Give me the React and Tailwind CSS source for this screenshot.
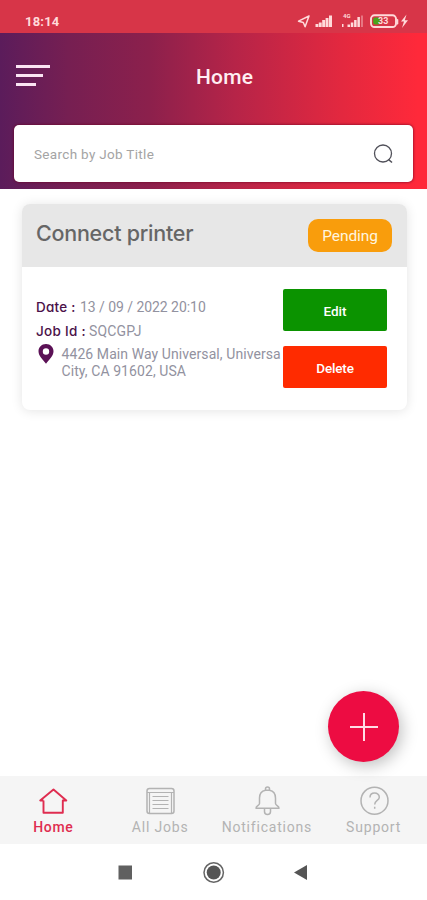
import React from 'react';

function StatusBar() {
  return (
    <div className="flex h-[33px] items-center justify-between bg-[#d73548] pl-[25px] pr-[18px] pt-[9px] text-[#ffdada]">
      <span className="text-[13px] font-bold leading-none tracking-[0.200px]">18:14</span>
      <svg width="112" height="16" viewBox="297 13 112 16" fill="none">
        <path d="M309 16l-10.500 5.200 4.800 1.300 1.800 4.200z" stroke="currentColor" strokeWidth="1.500" strokeLinejoin="round" />
        <g fill="currentColor">
          <path d="M315.500 24h2.800v3h-2.800zM318.800 22.500h2.900v4.500h-2.900zM322.200 20h2.900v7h-2.900zM325.600 18h2.900v9h-2.900zM329 15.500h3v11.500h-3z" />
          <text x="343" y="18" fontSize="6" fontWeight="700">4G</text>
          <path d="M342 24h1.500v3h-1.500zM347.500 24.500h2.500v2.500h-2.500zM350.800 22.500h2.500v4.500h-2.500zM354.100 20h2.500v7h-2.500zM357.400 17h2.500v10h-2.500z" />
          <path opacity=".4" d="M361 15.500h2v11.500h-2z" />
          <path d="M396.500 18.500l1.800 1v4.500l-1.800 1z" />
          <path d="M406.500 14.500l-5.500 7h3l-2 6.500 6-7.800h-3.200z" />
        </g>
        <rect x="371" y="15.300" width="25" height="11.700" rx="3.500" stroke="currentColor" strokeWidth="1.900" />
        <rect x="373.200" y="17.600" width="7" height="7" rx="2" fill="#4ba51c" />
        <text x="378" y="24.300" fontSize="9" fontWeight="700" fill="currentColor">33</text>
      </svg>
    </div>
  );
}

function Header() {
  return (
    <header className="h-[156px] bg-linear-[90deg,#5b1c5b_0%,#761f52_16%,#8c204c_35%,#b62448_55%,#e3283f_80%,#ff293a_98%] px-[14px]">
      <div className="flex h-[92px] items-center pb-[6px]">
        <button className="ml-[2px] flex w-[34px] flex-col gap-[6px] pb-[2px]" aria-label="Menu">
          <span className="h-[3px] w-[34px] bg-[#fbe4f3]" />
          <span className="h-[3px] w-[27px] bg-[#fbe4f3]" />
          <span className="h-[3px] w-[20px] bg-[#fbe4f3]" />
        </button>
        <h1 className="ml-[146px] pt-[2px] text-[21px] font-medium leading-none tracking-[0.200px] text-[#ffeef2]">Home</h1>
      </div>
      <div className="flex h-[57px] items-center justify-between rounded-[5px] bg-white pl-[20px] pr-[19px] shadow-[0_0_3px_#69001f]">
        <span className="pt-[2px] text-[13.500px] tracking-[0.320px] text-[#a4a4a4]">Search by Job Title</span>
        <svg width="22" height="22" viewBox="0 0 22 22" fill="none" stroke="#505059" strokeWidth="1.300">
          <circle cx="11" cy="10.500" r="8.500" />
          <path d="M16.500 16.500l3.500 3" strokeWidth="1.600" />
        </svg>
      </div>
    </header>
  );
}

function JobCard() {
  return (
    <article className="ml-[22px] mt-[15px] h-[206px] w-[385px] overflow-hidden rounded-[8px] bg-white shadow-[0_1px_12px_rgba(0,0,0,0.11)]">
      <div className="flex h-[63px] items-center justify-between bg-[#e7e7e7] pl-[14px] pr-[15px]">
        <h2 className="pb-[3px] font-[Inter,sans-serif] text-[21.500px] font-medium leading-none tracking-[-0.250px] text-[#666] [font-feature-settings:'cv11']">Connect printer</h2>
        <span className="flex h-[33px] w-[84px] items-center justify-center rounded-[10px] bg-[#f99d0c] pt-[2px] text-[15.500px] tracking-[-0.080px] text-[#fff5df]">Pending</span>
      </div>
      <div className="flex pt-[22px]">
        <div className="w-[261px] shrink-0 pl-[14px] pt-[6px] text-[14px] text-[#9292a0]">
          <p className="flex h-[24px] items-center whitespace-pre">
            <b className="w-[44px] shrink-0 font-[Inter,sans-serif] text-[13.500px] font-medium tracking-[0.250px] text-[#4b1149] [font-feature-settings:'cv11']">Date :</b>
            <span className="tracking-[-0.050px]">13 / 09 / 2022 20:10</span>
          </p>
          <p className="flex h-[24px] items-center whitespace-pre">
            <b className="w-[53px] shrink-0 font-[Inter,sans-serif] text-[13.500px] font-medium tracking-[0.300px] text-[#4b1149] [font-feature-settings:'cv11']">Job Id :</b>
            <span className="tracking-[0.150px]">SQCGPJ</span>
          </p>
          <div className="flex pt-[1px]">
            <svg className="ml-[2px] shrink-0" width="16" height="20" viewBox="0 0 16 20">
              <path fill="#5b1156" fillRule="evenodd" d="M8 0C3.500 0 .5 3.300.5 7.300.5 12 5 16 8 19.800 11 16 15.500 12 15.500 7.300 15.500 3.300 12.500 0 8 0zm0 4.300a3.200 3.200 0 1 1 0 6.400 3.200 3.200 0 0 1 0-6.400z" />
            </svg>
            <p className="ml-[7.500px] whitespace-nowrap pt-[2px] leading-[17px] tracking-[0.080px]">4426 Main Way Universal, Universa<br />City, CA 91602, USA</p>
          </div>
        </div>
        <div className="flex w-[104px] shrink-0 flex-col gap-[15px] text-[13.500px] text-white">
          <button className="h-[42px] rounded-[2px] bg-[#0b9300] pt-[2px] font-medium">Edit</button>
          <button className="h-[42px] rounded-[2px] bg-[#ff2b00] pt-[2px] font-medium tracking-[-0.150px]">Delete</button>
        </div>
      </div>
    </article>
  );
}

function Tab({ label, active, children }) {
  return (
    <div className={active ? 'flex flex-1 flex-col items-center text-[#df2d50]' : 'flex flex-1 flex-col items-center text-[#b3b3b3]'}>
      <svg width="32" height="32" viewBox="0 0 32 32" fill="none" stroke="currentColor" strokeWidth="1.500">{children}</svg>
      <span className={active ? 'mt-[2px] text-[14px] font-medium leading-[16px] tracking-[0.700px]' : 'mt-[2px] text-[14px] leading-[16px] tracking-[0.800px]'}>{label}</span>
    </div>
  );
}

function TabBar() {
  return (
    <nav className="flex h-[68px] bg-[#f5f5f5] pt-[9px]">
      <Tab label="Home" active>
        <path strokeWidth="1.900" d="M6.500 15.500v12.300h19.300V15.500h3.500L16.500 4.500 3.200 15.500h3.300" strokeLinejoin="round" />
      </Tab>
      <Tab label="All Jobs">
        <rect x="3" y="3.500" width="27" height="25" rx="2.500" />
        <path d="M3 7.500h27M5.500 7.500v20.500M27.500 7.500v20.500M8.500 11.500h16M8.500 15.500h16M8.500 19.500h16M8.500 23.500h16" strokeWidth="1.200" />
      </Tab>
      <Tab label="Notifications">
        <path strokeLinejoin="round" d="M14.500 5.300V4a2 2 0 0 1 4 0v1.300c3.700.8 6 3.500 6 7.700v5.500c0 2 3.500 2.500 3.500 4.800H5c0-2.300 3.500-2.800 3.500-4.800V13c0-4.200 2.300-6.900 6-7.700zM13.500 23.500v3a3 3 0 0 0 6 0v-3M14.500 5.300h4" />
      </Tab>
      <Tab label="Support">
        <circle cx="16.500" cy="15.700" r="13.500" />
        <path d="M12 12.500c0-5.800 9.300-5.800 9.300-.3 0 3.300-4.600 3.200-4.600 7.300M16.700 21.800v2" />
      </Tab>
    </nav>
  );
}

function SystemNav() {
  return (
    <div className="flex h-[56px] justify-center bg-white">
      <svg width="193" height="56" viewBox="117 844 193 56">
        <rect x="118.500" y="865.500" width="13.500" height="14" fill="#606060" />
        <circle cx="213.700" cy="872.500" r="9.700" fill="none" stroke="#656565" strokeWidth="1.500" />
        <circle cx="213.700" cy="872.500" r="7" fill="#555" />
        <path d="M307 865v15l-13-7.500z" fill="#555" />
      </svg>
    </div>
  );
}

export default function App() {
  return (
    <div className="relative flex h-[900px] w-[427px] flex-col overflow-hidden bg-white font-[Roboto,sans-serif]">
      <StatusBar />
      <Header />
      <main className="flex-1">
        <JobCard />
      </main>
      <button aria-label="Add job" className="absolute left-[328px] top-[691px] flex size-[71px] items-center justify-center rounded-full bg-[#ed0c42] shadow-[3px_4px_16px_rgba(0,0,0,0.25)]">
        <svg width="28" height="28" viewBox="0 0 28 28" stroke="#ffdce5" strokeWidth="2">
          <path d="M14 0v28M0 14h28" />
        </svg>
      </button>
      <TabBar />
      <SystemNav />
    </div>
  );
}
